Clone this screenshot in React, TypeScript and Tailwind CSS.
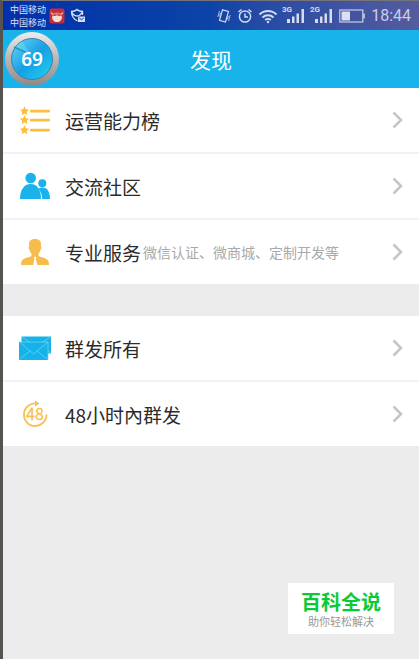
import type { ReactNode } from "react";

type Item = {
  label: string;
  note?: string;
  icon: ReactNode;
};

function RankIcon() {
  return (
    <svg viewBox="0 0 30 28" className="w-[30px] h-7" fill="#fcbe3c">
      {[5, 14, 24].map((y) => (
        <g key={y} transform={`translate(0 ${y})`}>
          <path d="M4.5-4.8 5.9-1.7 9-1.3 6.700.9 7.300 4.200 4.500 2.600 1.700 4.200 2.300.9 0-1.300 3.100-1.700Z" />
          <rect x="10" y="-1.200" width="20" height="2.700" rx="1.200" />
        </g>
      ))}
    </svg>
  );
}

function PeopleIcon() {
  return (
    <svg viewBox="0 0 30 28" className="w-[30px] h-7" fill="#1ab2ea">
      <circle cx="10.7" cy="6" r="5.3" />
      <circle cx="22.3" cy="11.3" r="4" />
      <path d="M0 27C0 18 4 12 10.700 12S21 18 21 27Z" />
      <path d="M18.200 16.800C20 15.600 21 15.400 22.400 15.400 27.500 15.400 30 20 30 27h-7.800c0-4.300-1.500-7.600-4-10.200Z" />
    </svg>
  );
}

function ServiceIcon() {
  return (
    <svg viewBox="0 0 28 28" className="w-7 h-7" fill="#f7bd4c">
      <path d="M14 1c3.800 0 6 1.700 6 5v2.500c.6.7.4 2.500-.4 3-.4 1.800-1 3-2 4v2.500c2.500 1.600 6 1.500 8.400 3.500 1.300 1 2 2.500 2 5.500H0c0-3 .7-4.500 2-5.500 2.400-2 5.900-1.900 8.400-3.500v-2.500c-1-1-1.600-2.200-2-4-.8-.5-1-2.300-.4-3V6c0-3.300 2.200-5 6-5Z" />
      <path d="m12.800 19.500 1.300-1 1.300 1-.6 1.500L16.300 27h-4.200l1.300-6Z" fill="#fff" />
    </svg>
  );
}

function EnvelopesIcon() {
  return (
    <svg viewBox="0 0 32 24" className="w-8 h-6" fill="#16b3e9" stroke="#7fd2f2" strokeWidth=".7">
      <path d="M2.500.5H32v17H2.500Z" stroke="none" />
      <path d="M3 1l14 9.500L31.500 1M29 15l2.500 2" fill="none" />
      <path d="M0 6h29v18H0Z" stroke="none" />
      <path d="M.5 6h28.500v17.500M.5 6l14 12L29 6M.5 23.500 11 15M28.500 23.500 18 15" fill="none" />
    </svg>
  );
}

function RepeatIcon() {
  return (
    <svg viewBox="0 0 28 28" className="w-7 h-7" fill="none" stroke="#f9bf50" strokeWidth="1.800">
      <path d="M15.500 3.500A11.300 11.300 0 1 0 25.500 14.500" />
      <path d="M14 .5 18.500 3.500 14 6.500Z" fill="#f9bf50" stroke="none" />
      <text
        x="14"
        y="20"
        textAnchor="middle"
        fontSize="16"
        fontFamily="Noto Sans CJK SC, sans-serif"
        fill="#f9bf50"
        stroke="#f9bf50"
        strokeWidth=".3"
      >
        48
      </text>
    </svg>
  );
}

const groups: Item[][] = [
  [
    { label: "运营能力榜", icon: <RankIcon /> },
    { label: "交流社区", icon: <PeopleIcon /> },
    { label: "专业服务", note: "微信认证、微商城、定制开发等", icon: <ServiceIcon /> },
  ],
  [
    { label: "群发所有", icon: <EnvelopesIcon /> },
    { label: "48小时內群发", icon: <RepeatIcon /> },
  ],
];

function Signal({ label }: { label: string }) {
  return (
    <svg viewBox="0 0 23 18" className="w-[23px] h-[18px]" fill="#d5dcf0">
      <text x="0" y="7" fontSize="8" fontWeight="700" fontFamily="Roboto, sans-serif">
        {label}
      </text>
      <path d="M5 14h3v4H5ZM10 11.500h2.500V18H10ZM14.500 8.500H17V18h-2.500ZM19.500 4H22v14h-2.500Z" />
    </svg>
  );
}

function StatusBar() {
  return (
    <div className="h-[29px] flex items-center pl-[7px] pr-2 bg-linear-to-r from-[#032fab] via-[#0c44a6] to-[#555b9e] text-[#dce2f3]">
      <div className="text-[9px] leading-[13px]">
        <div>中国移动</div>
        <div>中国移动</div>
      </div>
      <svg viewBox="0 0 16 16" className="w-4 h-4 ml-[3px]">
        <rect x=".5" y=".5" width="15" height="15" rx="2" fill="#c72c3d" />
        <path d="M2 2.500c0 2 1 3 3 3h6c2 0 3-1 3-3 .8 3-.3 4.500-3 4.500H5C2.300 7 1.200 5.500 2 2.500Z" fill="#f0b9a0" />
        <path d="M3.500 6c2-2 7-2 9 0v4h-9Z" fill="#dc7468" />
        <path d="M3 8.500c2-1 8-1 10 0 0 3.500-2 5.500-5 5.500s-5-2-5-5.500Z" fill="#f3e0d4" />
        <path d="M5 7.200h1.500M9.500 7.200H11" stroke="#7b2430" />
      </svg>
      <svg viewBox="0 0 16 16" className="w-4 h-4 ml-[5px]" fill="none" stroke="#d4def5" strokeWidth="1.300">
        <path d="M7.500 13C3.500 11 1.500 8 1.500 3.500 4 3.500 5.500 3 7 1.500 8.500 3 10.500 3.500 12.500 3.500V7M1.500 3.500C3 7 5 8 7 8s4-1.500 5.500-4.500" />
        <path d="M8 8.500h7V14H8Z" fill="#d4def5" stroke="none" />
        <path d="m9.300 10 2.200 1.700L13.700 10" stroke="#173e9e" strokeWidth="1" />
      </svg>
      <div className="ml-auto flex items-center">
        <svg viewBox="0 0 14 16" className="w-[14px] h-4" fill="none" stroke="#d0d9ef" strokeWidth="1.200">
          <path d="M5.500 1.800 11.500 3.500 8.500 14 2.500 12.300Z" />
          <path d="M2.500 3 .8 9M13.200 7l-1.700 6M3.500 5l-1 3.500M11.300 8l-1 3.500" strokeWidth=".8" />
        </svg>
        <svg viewBox="0 0 16 16" className="w-4 h-4 ml-[6px]" fill="none" stroke="#d0d9ef" strokeWidth="1.500">
          <circle cx="8" cy="8.500" r="5.600" />
          <path d="M8 5.500v3.500h3M1.500 4 4.500 1.500M14.500 4l-3-2.500" />
        </svg>
        <svg viewBox="0 0 20 16" className="w-5 h-4 ml-[5px]" fill="none" stroke="#d5dcf0" strokeWidth="1.900">
          <path d="M1.500 6.500a12 12 0 0 1 17 0M4.500 9.500a8 8 0 0 1 11 0M7.200 12a4 4 0 0 1 5.600 0" />
          <circle cx="10" cy="14" r="1.200" fill="#d5dcf0" stroke="none" />
        </svg>
        <div className="mb-1 ml-1 flex gap-[5px]">
          <Signal label="3G" />
          <Signal label="2G" />
        </div>
        <svg viewBox="0 0 26 14" className="w-[26px] h-[14px] ml-[6px]" fill="none" stroke="#c9d0e8" strokeWidth="1.200">
          <rect x=".8" y="1" width="23" height="12" />
          <rect x="2.500" y="2.500" width="8.500" height="9" fill="#dce0f0" stroke="none" />
          <path d="M25 4.500v5" strokeWidth="1.600" />
        </svg>
        <time className="ml-[6px] font-[Roboto] text-[16px] leading-5 text-[#c9cde6]">18:44</time>
      </div>
    </div>
  );
}

function SpeedBadge() {
  return (
    <button
      type="button"
      className="absolute left-[2px] top-[2px] size-[54px] rounded-full p-[6px] bg-linear-to-b from-[#f0eeec] via-[#b9b7b6] to-[#8d8987]"
    >
      <span className="relative flex size-full items-center justify-center rounded-full border border-[#3b7fae] bg-linear-to-br from-[#5fd8f8] via-[#169fe4] to-[#25d2f0] font-['Noto_Sans'] text-[19px] font-semibold text-white">
        <svg viewBox="0 0 40 40" className="absolute inset-0 size-full">
          <path d="M2 9 20 18 10 2Z" fill="#a1f5ff" opacity=".25" />
          <path d="m2 8 13 6" stroke="#139bbb" strokeWidth="1.500" />
        </svg>
        <span className="relative">69</span>
      </span>
    </button>
  );
}

function Row({ item }: { item: Item }) {
  return (
    <li>
      <button type="button" className="flex h-16 w-full items-center bg-white pl-4 pr-4 text-left">
        <span className="flex w-8 shrink-0 justify-center">{item.icon}</span>
        <span className="ml-[14px] whitespace-nowrap pt-[2px] text-[19px] leading-6 text-[#2b2b2b]">{item.label}</span>
        {item.note && (
          <span className="ml-[2px] whitespace-nowrap text-[14px] leading-5 text-[#aaaaaa]">{item.note}</span>
        )}
        <svg viewBox="0 0 11 18" className="ml-auto h-[18px] w-[11px] shrink-0" fill="none" stroke="#c5c7c7" strokeWidth="2.600">
          <path d="m1.500 1.500 7.500 7.500-7.500 7.500" />
        </svg>
      </button>
    </li>
  );
}

export default function App() {
  return (
    <div className="flex min-h-screen flex-col border-l-[3px] border-t border-l-[#55534f] border-t-[#77737a] bg-[#ececec] font-['Noto_Sans_CJK_SC',sans-serif]">
      <StatusBar />
      <header className="relative flex h-[58px] items-center justify-center bg-[#19b3eb]">
        <SpeedBadge />
        <h1 className="text-[21px] leading-7 text-white">发现</h1>
      </header>
      <main className="flex flex-col gap-8">
        {groups.map((items) => (
          <ul key={items[0].label} className="divide-y-2 divide-[#f1f1f1]">
            {items.map((item) => (
              <Row key={item.label} item={item} />
            ))}
          </ul>
        ))}
      </main>
      <footer className="mt-auto mr-[25px] mb-[25px] self-end bg-white px-[13px] pt-2 pb-1 text-center font-['Liberation_Sans','Noto_Sans_CJK_SC',sans-serif]">
        <div className="text-[20px] font-bold leading-6 text-[#0cca36]">百科全说</div>
        <div className="text-[11px] leading-[15px] text-[#999999]">助你轻松解决</div>
      </footer>
    </div>
  );
}
